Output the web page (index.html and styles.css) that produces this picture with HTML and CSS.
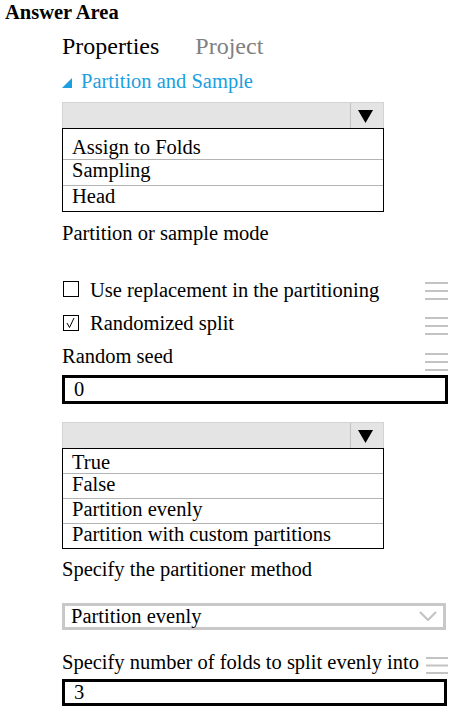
FILE: index.html
```html
<!DOCTYPE html>
<html>
<head>
<meta charset="utf-8">
<link rel="stylesheet" href="styles.css">
</head>
<body>
<div class="title">Answer Area</div>
<div class="panel">
  <div class="tabs"><span class="tab tab--active">Properties</span><span class="tab tab--muted">Project</span></div>
  <div class="section-head"><svg class="collapse-tri" width="10" height="10" viewBox="0 0 10 10"><polygon points="10,0 10,10 0,10" fill="#1a9fe0"/></svg><span>Partition and Sample</span></div>

  <div class="dropdown dropdown--top">
    <div class="dd-bar"><div class="dd-arrow"><svg width="15" height="13" viewBox="0 0 15 13"><polygon points="0,0 15,0 7.5,13" fill="#000"/></svg></div></div>
    <div class="dd-list dd-list--a">
      <div class="dd-item">Assign to Folds</div>
      <div class="dd-item">Sampling</div>
      <div class="dd-item">Head</div>
    </div>
  </div>

  <div class="label label--mode">Partition or sample mode</div>

  <div class="opt-row opt-row--first">
    <div class="opt-left"><span class="checkbox"></span><span>Use replacement in the partitioning</span></div>
    <svg class="menu-icon menu-icon--1" width="23" height="18" viewBox="0 0 23 18"><rect y="0" width="23" height="2" fill="#c3c3c3"/><rect y="8" width="23" height="2" fill="#c3c3c3"/><rect y="16" width="23" height="2" fill="#c3c3c3"/></svg>
  </div>
  <div class="opt-row">
    <div class="opt-left"><span class="checkbox checkbox--on"><svg width="14" height="14" viewBox="0 0 14 14"><polyline points="3,7 5.5,11.5 10,2" fill="none" stroke="#000" stroke-width="1"/></svg></span><span>Randomized split</span></div>
    <svg class="menu-icon menu-icon--2" width="23" height="18" viewBox="0 0 23 18"><rect y="0" width="23" height="2" fill="#c3c3c3"/><rect y="8" width="23" height="2" fill="#c3c3c3"/><rect y="16" width="23" height="2" fill="#c3c3c3"/></svg>
  </div>
  <div class="opt-row">
    <div class="opt-left"><span>Random seed</span></div>
    <svg class="menu-icon menu-icon--3" width="23" height="18" viewBox="0 0 23 18"><rect y="0" width="23" height="2" fill="#c3c3c3"/><rect y="8" width="23" height="2" fill="#c3c3c3"/><rect y="16" width="23" height="2" fill="#c3c3c3"/></svg>
  </div>
  <div class="text-input text-input--seed">0</div>

  <div class="dropdown dropdown--second">
    <div class="dd-bar"><div class="dd-arrow"><svg width="15" height="13" viewBox="0 0 15 13"><polygon points="0,0 15,0 7.5,13" fill="#000"/></svg></div></div>
    <div class="dd-list dd-list--b">
      <div class="dd-item">True</div>
      <div class="dd-item">False</div>
      <div class="dd-item">Partition evenly</div>
      <div class="dd-item">Partition with custom partitions</div>
    </div>
  </div>

  <div class="label label--method">Specify the partitioner method</div>

  <div class="select">
    <span>Partition evenly</span>
    <svg class="chevron" width="18" height="10" viewBox="0 0 18 10"><polyline points="1,1 9,9 17,1" fill="none" stroke="#c3c3c3" stroke-width="2.2"/></svg>
  </div>

  <div class="opt-row opt-row--folds">
    <div class="opt-left"><span>Specify number of folds to split evenly into</span></div>
    <svg class="menu-icon menu-icon--4" width="22" height="17" viewBox="0 0 22 17"><rect y="0" width="22" height="2" fill="#c3c3c3"/><rect y="7.5" width="22" height="2" fill="#c3c3c3"/><rect y="15" width="22" height="2" fill="#c3c3c3"/></svg>
  </div>
  <div class="text-input text-input--folds">3</div>
</div>
</body>
</html>
```

FILE: styles.css
```css
html, body {
  margin: 0;
  padding: 0;
  background: #fff;
}
body {
  font-family: "Liberation Serif", "Times New Roman", serif;
  font-size: 20.5px;
  color: #000;
  width: 455px;
}
.title {
  font-weight: bold;
  font-size: 20.5px;
  line-height: 24px;
  padding-left: 5px;
}
.panel {
  margin-left: 62px;
  width: 386px;
}
.tabs {
  margin-top: 7px;
  font-size: 24px;
  line-height: 30px;
  white-space: nowrap;
}
.tab--active { color: #000; }
.tab--muted { color: #808080; margin-left: 36px; }
.section-head {
  margin-top: 7px;
  line-height: 26px;
  color: #1a9fe0;
  white-space: nowrap;
}
.collapse-tri {
  display: inline-block;
  vertical-align: baseline;
  margin-right: 9px;
}
.dropdown { width: 322px; }
.dropdown--top { margin-top: 8px; }
.dropdown--second { margin-top: 18px; }
.dd-bar {
  height: 26px;
  box-sizing: border-box;
  background: #e4e4e4;
  border: 1px solid #d3d3d3;
  border-bottom: none;
  display: flex;
  justify-content: flex-end;
}
.dd-arrow {
  width: 33px;
  box-sizing: border-box;
  border-left: 1px solid #c2c2c2;
  display: flex;
  justify-content: center;
  padding-top: 7px;
  padding-right: 3px;
}
.dd-list {
  border: 1px solid #000;
}
.dd-item {
  line-height: 20px;
  padding: 0 0 4px 9px;
  border-bottom: 1px solid #b4b4b4;
  white-space: nowrap;
}
.dd-item:last-child { border-bottom: none; }
.dd-list--a .dd-item { padding-bottom: 5px; }
.dd-list--a .dd-item:first-child { padding-top: 8px; padding-bottom: 2px; }
.dd-list--b .dd-item:first-child { padding-top: 3px; padding-bottom: 1px; }
.label {
  line-height: 24px;
  white-space: nowrap;
}
.label--mode { margin-top: 9px; }
.label--method { margin-top: 8px; }
.opt-row {
  display: flex;
  justify-content: space-between;
  align-items: flex-start;
  height: 24px;
  line-height: 24px;
  margin-top: 9px;
  white-space: nowrap;
}
.opt-row--first { margin-top: 33px; }
.opt-row--folds { margin-top: 20px; }
.opt-left {
  display: flex;
  align-items: flex-start;
}
.checkbox {
  width: 16px;
  height: 16px;
  box-sizing: border-box;
  border: 1px solid #000;
  margin: 3px 11px 0 1px;
  display: flex;
  align-items: center;
  justify-content: center;
}
.checkbox--on { margin-top: 4px; }
.menu-icon { display: block; flex: none; }
.menu-icon--1 { margin-top: 4px; }
.menu-icon--2 { margin-top: 6px; }
.menu-icon--3 { margin-top: 9px; }
.menu-icon--4 { margin-top: 7px; }
.text-input {
  box-sizing: border-box;
  border: 3px solid #000;
  padding-left: 9px;
}
.text-input--seed { margin-top: 7px; line-height: 23px; }
.text-input--folds { margin-top: 5px; line-height: 21px; width: 385px; }
.select {
  margin-top: 22px;
  width: 384px;
  box-sizing: border-box;
  border: 3px solid #c8c8c8;
  line-height: 21px;
  padding: 0 6px 0 6px;
  display: flex;
  justify-content: space-between;
  align-items: flex-start;
  white-space: nowrap;
}
.chevron { display: block; margin-top: 5px; }
```
